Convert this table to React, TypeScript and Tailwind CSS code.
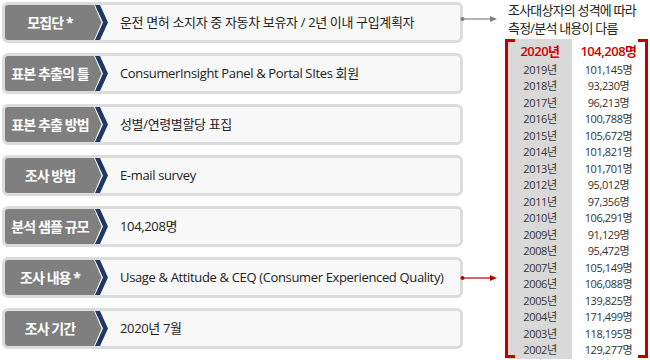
import React from 'react'

type Row = { label: string; value: string; arrow?: 'gray' | 'red' }

const rows: Row[] = [
  { label: '모집단 *', value: '운전 면허 소지자 중 자동차 보유자 / 2년 이내 구입계획자', arrow: 'gray' },
  { label: '표본 추출의 틀', value: 'ConsumerInsight Panel & Portal SItes 회원' },
  { label: '표본 추출 방법', value: '성별/연령별할당 표집' },
  { label: '조사 방법', value: 'E-mail survey' },
  { label: '분석 샘플 규모', value: '104,208명' },
  { label: '조사 내용 *', value: 'Usage & Attitude & CEQ (Consumer Experienced Quality)', arrow: 'red' },
  { label: '조사 기간', value: '2020년 7월' },
]

const years: [string, string][] = [
  ['2019년', '101,145명'],
  ['2018년', '93,230명'],
  ['2017년', '96,213명'],
  ['2016년', '100,788명'],
  ['2015년', '105,672명'],
  ['2014년', '101,821명'],
  ['2013년', '101,701명'],
  ['2012년', '95,012명'],
  ['2011년', '97,356명'],
  ['2010년', '106,291명'],
  ['2009년', '91,129명'],
  ['2008년', '95,472명'],
  ['2007년', '105,149명'],
  ['2006년', '106,088명'],
  ['2005년', '139,825명'],
  ['2004년', '171,499명'],
  ['2003년', '118,195명'],
  ['2002년', '129,277명'],
]

function Arrow({ color }: { color: string }) {
  return (
    <svg width="38" height="10" viewBox="0 0 38 10" className="-ml-[3px] shrink-0">
      <circle cx="2.5" cy="5" r="2" fill={color} />
      <line x1="2" y1="5" x2="31" y2="5" stroke={color} strokeWidth="1.2" />
      <polygon points="30,2 37,5 30,8" fill={color} />
    </svg>
  )
}

function InfoRow({ row }: { row: Row }) {
  return (
    <div className={`flex ${row.arrow === 'gray' ? 'items-start' : 'items-center'}`}>
      <div className="flex h-[41px] w-[461px] shrink-0 rounded-[6px] border-[3px] border-[#dcdcdc] bg-[#f8f8f8]">
        <div className="relative h-full w-[103px] shrink-0">
          <svg width="103" height="35" viewBox="0 0 103 35" className="absolute inset-0">
            <path d="M3 0 H89 L96.5 17.5 L89 35 H3 Q0 35 0 32 V3 Q0 0 3 0 Z" fill="#7f7f7f" />
            <polygon points="90,0 95,0 103,17.5 95,35 90,35 98,17.5" fill="#1f3864" />
          </svg>
          <span className="relative flex h-full w-[90px] items-center justify-center text-[14px] font-bold tracking-[-0.9px] text-white">
            {row.label}
          </span>
        </div>
        <div className="flex items-center pl-[12px] text-[13px] tracking-[-0.35px] text-[#222222]">
          {row.value}
        </div>
      </div>
      {row.arrow === 'gray' ? (
        <div className="mt-[12px]">
          <Arrow color="#808080" />
        </div>
      ) : null}
      {row.arrow === 'red' ? <Arrow color="#c00000" /> : null}
    </div>
  )
}

export default function App() {
  return (
    <div
      className="flex h-[360px] w-[650px] overflow-hidden bg-white"
      style={{ fontFamily: '"Open Sans", "Noto Sans CJK KR", sans-serif' }}
    >
      <div className="flex w-[498px] shrink-0 flex-col gap-[10px] pl-[2px] pt-[2px]">
        {rows.map((row) => (
          <InfoRow key={row.label} row={row} />
        ))}
      </div>

      <div className="ml-[7px] flex w-[143px] shrink-0 flex-col">
        <div className="h-[39px] whitespace-nowrap pl-[3px] pt-[1px] text-[13px] leading-[18px] tracking-[-0.8px] text-[#222222]">
          조사대상자의 성격에 따라
          <br />
          측정/분석 내용이 다름
        </div>

        <div className="relative flex h-[319px] flex-col border-x-[3px] border-[#c00000]">
          <div className="absolute -left-[3px] top-0 h-[3px] w-[10px] bg-[#c00000]" />
          <div className="absolute -right-[3px] top-0 h-[3px] w-[10px] bg-[#c00000]" />
          <div className="absolute -left-[3px] bottom-0 h-[3px] w-[10px] bg-[#c00000]" />
          <div className="absolute -right-[3px] bottom-0 h-[3px] w-[10px] bg-[#c00000]" />

          <div className="grid h-[24px] grid-cols-[64px_1fr] text-[13px] font-semibold tracking-[-0.5px] text-[#d00000]">
            <div className="flex items-center justify-center bg-[#d9d9d9] pt-[3px]">2020년</div>
            <div className="flex items-center justify-center pt-[3px]">104,208명</div>
          </div>
          {years.map(([year, count]) => (
            <div
              key={year}
              className="grid h-[16.5px] grid-cols-[64px_1fr] text-[11px] tracking-[-0.4px] text-[#333333]"
            >
              <div className="flex items-center justify-center bg-[#d9d9d9]">{year}</div>
              <div className="flex items-center justify-center">{count}</div>
            </div>
          ))}
          <div className="grid flex-1 grid-cols-[64px_1fr]">
            <div className="bg-[#d9d9d9]" />
          </div>
        </div>
      </div>
    </div>
  )
}
